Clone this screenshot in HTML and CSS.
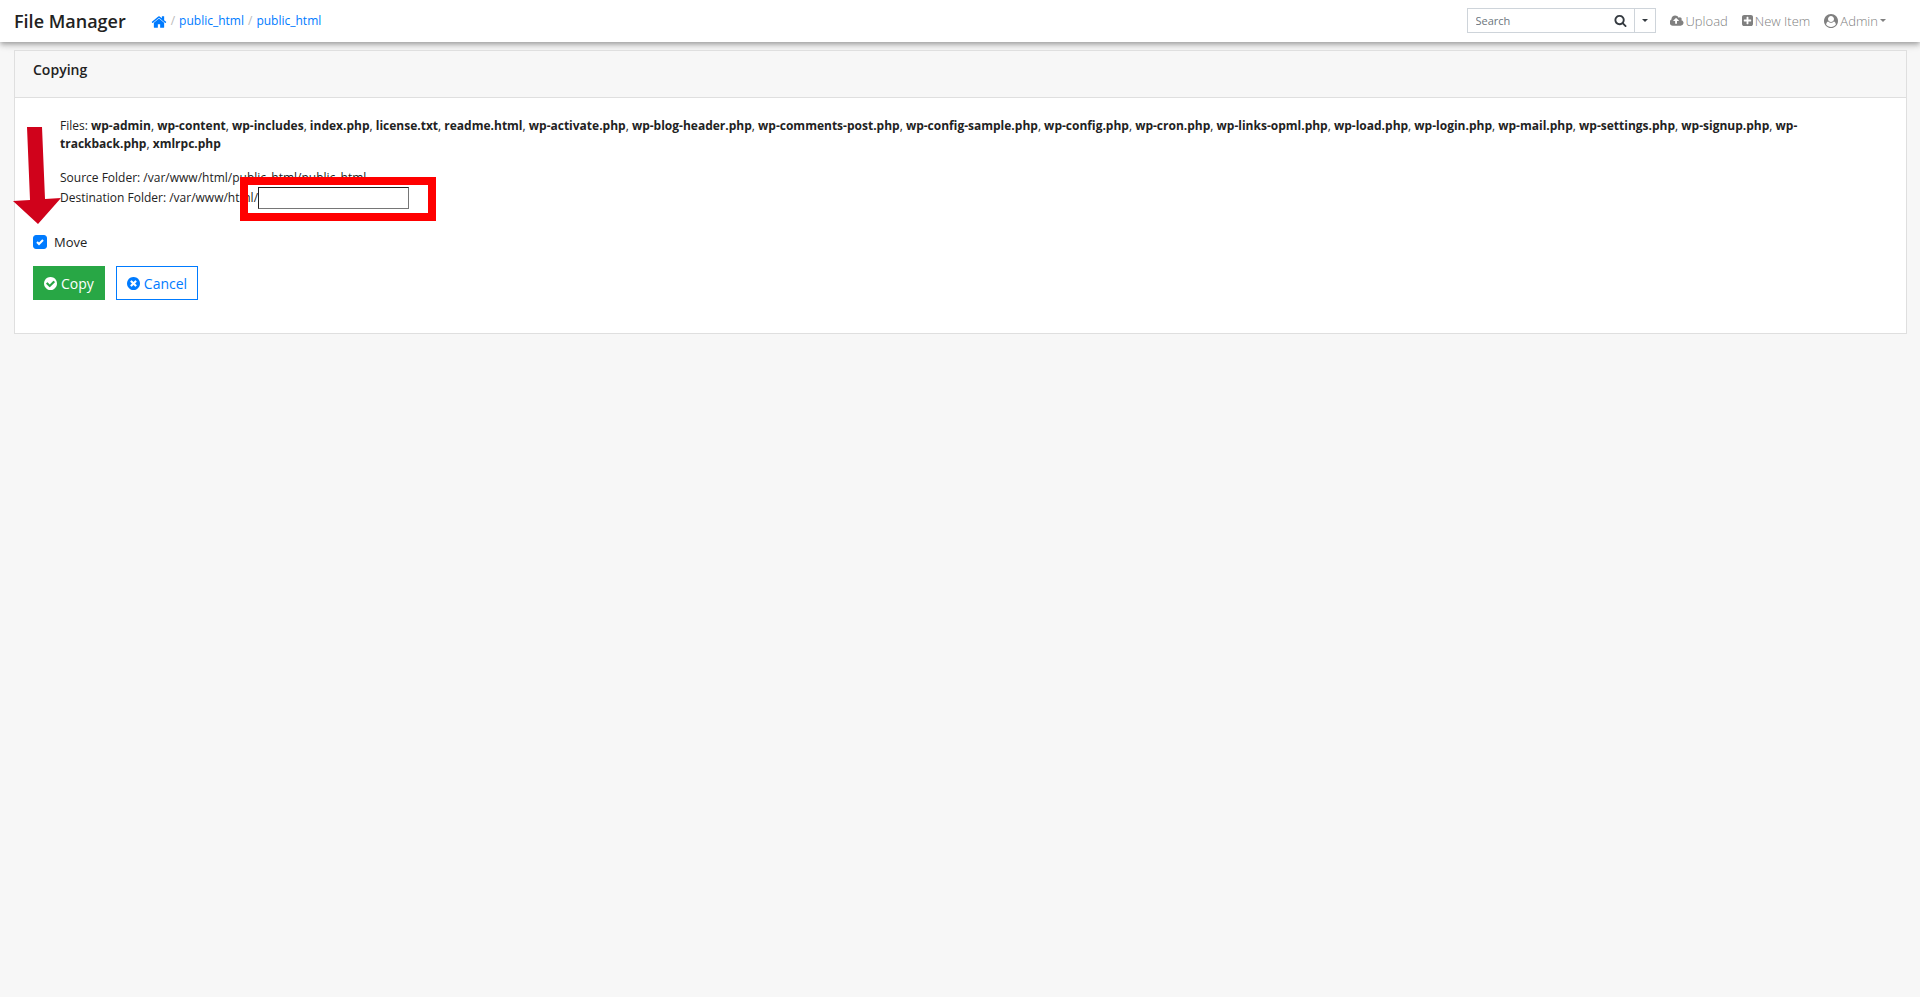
FILE: index.html
```
<!DOCTYPE html>
<html lang="en">
<head>
  <meta charset="UTF-8" />
  <meta name="viewport" content="width=device-width, initial-scale=1.0" />
  <title>File Manager</title>
  <link rel="stylesheet" href="styles.css">
</head>
<body>
  <nav class="navbar">
    <a class="brand" href="#">File Manager</a>
    <div class="breadcrumb">
      <a href="#" aria-label="Home"><svg class="icon icon-home" viewBox="0 0 1792 1792"><path d="M1472 992v480q0 26-19 45t-45 19h-384v-384h-256v384h-384q-26 0-45-19t-19-45v-480q0-1 .5-3t.5-3l575-474 575 474q1 2 1 6zm223-69l-62 74q-8 9-21 11h-3q-13 0-21-7l-692-577-692 577q-12 8-24 7-13-2-21-11l-62-74q-8-10-7-23.5t11-21.5l719-599q32-26 76-26t76 26l244 204v-195q0-14 9-23t23-9h192q14 0 23 9t9 23v408l219 182q10 8 11 21.5t-7 23.5z"/></svg></a>
      <span class="sep">/</span>
      <a href="#">public_html</a>
      <span class="sep">/</span>
      <a href="#">public_html</a>
    </div>

    <form class="search">
      <input type="text" class="search-input" placeholder="Search" aria-label="Search">
      <button type="button" class="search-btn" aria-label="Search"><svg class="icon" viewBox="0 0 1792 1792"><path d="M1216 832q0-185-131.5-316.5t-316.5-131.5-316.5 131.5-131.5 316.5 131.5 316.5 316.5 131.5 316.5-131.5 131.5-316.5zm512 832q0 52-38 90t-90 38q-54 0-90-38l-343-342q-179 124-399 124-143 0-273.5-55.5t-225-150-150-225-55.5-273.5 55.5-273.5 150-225 225-150 273.5-55.5 273.5 55.5 225 150 150 225 55.5 273.5q0 220-124 399l343 343q37 37 37 90z"/></svg></button>
      <button type="button" class="search-more" aria-label="Advanced search"><span class="caret"></span></button>
    </form>

    <div class="nav-links">
      <a href="#"><svg class="icon icon-wide" viewBox="0 0 1920 1792"><path d="M1216 864q0-14-9-23l-352-352q-9-9-23-9t-23 9l-351 351q-10 12-10 24 0 14 9 23t23 9h224v352q0 13 9.5 22.5t22.5 9.5h192q13 0 22.5-9.5t9.5-22.5v-352h224q13 0 22.5-9.5t9.5-22.5zm640 288q0 159-112.5 271.5t-271.5 112.5h-1088q-185 0-316.5-131.5t-131.5-316.5q0-130 70-240t188-165q-2-30-2-43 0-212 150-362t362-150q156 0 285.5 87t188.5 231q71-62 166-62 106 0 181 75t75 181q0 76-41 138 130 31 213.5 135.5t83.5 238.5z"/></svg>Upload</a>
      <a href="#"><svg class="icon icon-square" viewBox="128 128 1536 1536"><path d="M1408 960v-128q0-26-19-45t-45-19h-320v-320q0-26-19-45t-45-19h-128q-26 0-45 19t-19 45v320h-320q-26 0-45 19t-19 45v128q0 26 19 45t45 19h320v320q0 26 19 45t45 19h128q26 0 45-19t19-45v-320h320q26 0 45-19t19-45zm256-544v960q0 119-84.5 203.5t-203.5 84.5h-960q-119 0-203.5-84.5t-84.5-203.5v-960q0-119 84.5-203.5t203.5-84.5h960q119 0 203.5 84.5t84.5 203.5z"/></svg>New Item</a>
      <a href="#"><svg class="icon icon-wide" viewBox="0 0 1792 1792"><path fill-rule="evenodd" d="M1523 1339q-22-155-87.5-257.5t-184.5-118.5q-67 74-159.5 115.5t-195.5 41.5-195.5-41.5-159.5-115.5q-119 16-184.5 118.5t-87.5 257.5q106 150 271 237.5t356 87.5 356-87.5 271-237.5zm-243-699q0-159-112.5-271.5t-271.5-112.5-271.5 112.5-112.5 271.5 112.5 271.5 271.5 112.5 271.5-112.5 112.5-271.5zm512 256q0 182-71 348t-191 286-286 191-348 71-348-71-286-191-191-286-71-348 71-348 191-286 286-191 348-71 348 71 286 191 191 286 71 348z"/></svg>Admin<span class="caret"></span></a>
    </div>
  </nav>

  <form class="card">
    <h6 class="card-header">Copying</h6>
    <div class="card-body">
      <div class="details">
        <p class="files">Files: <b>wp-admin</b>, <b>wp-content</b>, <b>wp-includes</b>, <b>index.php</b>, <b>license.txt</b>, <b>readme.html</b>, <b>wp-activate.php</b>, <b>wp-blog-header.php</b>, <b>wp-comments-post.php</b>, <b>wp-config-sample.php</b>, <b>wp-config.php</b>, <b>wp-cron.php</b>, <b>wp-links-opml.php</b>, <b>wp-load.php</b>, <b>wp-login.php</b>, <b>wp-mail.php</b>, <b>wp-settings.php</b>, <b>wp-signup.php</b>, <b>wp-trackback.php</b>, <b>xmlrpc.php</b></p>
        <div class="source">Source Folder: /var/www/html/public_html/public_html</div>
        <div class="destination">
          <label for="copyTo">Destination Folder: /var/www/html/</label>
          <span class="marked">
            <input type="text" name="copy_to" id="copyTo">
            <span class="highlight"></span>
          </span>
        </div>
      </div>

      <div class="move">
        <input type="checkbox" name="move" id="move" checked>
        <svg class="tick" viewBox="0 0 14 14"><path d="M4 7l2 2 4-4"/></svg>
        <label for="move">Move</label>
        <svg class="arrow" viewBox="0 0 48 98"><path d="M14 1h15l3 72 16-1-23 26L0 75l17-1z"/></svg>
      </div>

      <div class="actions">
        <button type="submit" class="btn btn-success"><svg class="icon" viewBox="128 128 1536 1536"><path d="M1412 734q0-28-18-46l-91-90q-19-19-45-19t-45 19l-408 407-226-226q-19-19-45-19t-45 19l-91 90q-18 18-18 46 0 27 18 45l362 362q19 19 45 19 27 0 46-19l543-543q18-18 18-45zm252 162q0 209-103 385.5t-279.5 279.5-385.5 103-385.5-103-279.5-279.5-103-385.5 103-385.5 279.5-279.5 385.5-103 385.5 103 279.5 279.5 103 385.5z"/></svg>Copy</button>
        <button type="button" class="btn btn-outline"><svg class="icon" viewBox="128 128 1536 1536"><path d="M1277 1122q0-26-19-45l-181-181 181-181q19-19 19-45 0-27-19-46l-90-90q-19-19-46-19-26 0-45 19l-181 181-181-181q-19-19-45-19-27 0-46 19l-90 90q-19 19-19 46 0 26 19 45l181 181-181 181q-19 19-19 45 0 27 19 46l90 90q19 19 46 19 26 0 45-19l181-181 181 181q19 19 45 19 27 0 46-19l90-90q19-19 19-46zm387-226q0 209-103 385.5t-279.5 279.5-385.5 103-385.5-103-279.5-279.5-103-385.5 103-385.5 279.5-279.5 385.5-103 385.5 103 279.5 279.5 103 385.5z"/></svg>Cancel</button>
      </div>
    </div>
  </form>
</body>
</html>
```
FILE: styles.css
```
* {
  box-sizing: border-box;
}
body {
  margin: 0;
  background: #f7f7f7;
  color: #222;
  font-family: "Open Sans", "Noto Sans", sans-serif;
  font-size: 13px;
  line-height: 18px;
}
a {
  color: #007bff;
  text-decoration: none;
}
.icon {
  width: 13px;
  height: 13px;
  fill: currentColor;
}
.caret {
  border-top: 3px solid currentColor;
  border-left: 3px solid transparent;
  border-right: 3px solid transparent;
}

/* Top bar */
.navbar {
  display: flex;
  align-items: center;
  height: 42px;
  padding: 0 34px 1px 14px;
  background: #fff;
  box-shadow: 0 4px 5px 0 rgba(0,0,0,.14), 0 1px 10px 0 rgba(0,0,0,.12), 0 2px 4px -1px rgba(0,0,0,.2);
}
.brand {
  margin-right: 25px;
  color: #222;
  font-size: 18px;
  font-weight: 600;
}
.breadcrumb {
  display: flex;
  align-items: center;
  gap: 4px;
  flex: 1;
  font-size: 12px;
}
.breadcrumb a {
  display: flex;
}
.icon-home {
  width: 16px;
  height: 16px;
  margin-top: 2px;
}
.sep {
  color: #bbb;
}
.search {
  display: flex;
  height: 25px;
  margin-right: 14px;
  border: 1px solid #ced4da;
}
.search-input {
  width: 140px;
  padding: 0 8px;
  border: 0;
  font: 11px "Open Sans", sans-serif;
}
.search-input::placeholder {
  color: #6c757d;
}
.search-btn,
.search-more {
  display: flex;
  align-items: center;
  justify-content: center;
  padding: 0;
  border: 0;
  background: #fff;
  color: #343a40;
}
.search-btn {
  width: 26px;
}
.search-more {
  width: 21px;
  border-left: 1px solid #ced4da;
}
.nav-links {
  display: flex;
  gap: 14px;
}
.nav-links a {
  display: flex;
  align-items: center;
  gap: 2px;
  color: #808080;
  font-weight: 300;
}
.icon-wide {
  width: 14px;
  height: 14px;
}
.icon-square {
  width: 11px;
  height: 11px;
}

/* Copy form */
.card {
  margin: 8px 13px 0 14px;
  background: #fff;
  border: 1px solid #dfdfdf;
}
.card-header {
  margin: 0;
  padding: 10px 18px 18px;
  background: #f7f7f7;
  border-bottom: 1px solid #dfdfdf;
  font-size: 14px;
  font-weight: 600;
}
.card-body {
  padding: 19px 18px 33px;
}
.details {
  padding: 0 27px;
  font-size: 12px;
}
.files {
  margin: 0 0 16px;
}
.files b {
  font-weight: 700;
}
.destination {
  display: flex;
  align-items: center;
}
.marked {
  position: relative;
  display: flex;
}
.marked input {
  width: 151px;
  height: 22px;
  border: 1px inset #767676;
}
.highlight {
  position: absolute;
  top: -10px;
  left: -18px;
  width: 196px;
  height: 44px;
  border: 8px solid #f00;
  pointer-events: none;
}
.move {
  position: relative;
  display: flex;
  align-items: center;
  gap: 7px;
  margin-top: 24px;
}
.move input {
  appearance: none;
  width: 14px;
  height: 14px;
  margin: 0;
  border-radius: 3px;
  background: #fff;
  border: 1px solid #adb5bd;
}
.move input:checked {
  background: #007bff;
  border-color: #007bff;
}
.tick {
  position: absolute;
  left: 0;
  width: 14px;
  height: 14px;
  fill: none;
  stroke: #fff;
  stroke-width: 2;
  pointer-events: none;
}
.move label {
  font-size: 13px;
}
.arrow {
  position: absolute;
  left: -20px;
  bottom: 27px;
  width: 48px;
  height: 98px;
  fill: #d0021b;
}
.actions {
  display: flex;
  gap: 11px;
  margin-top: 15px;
}
.btn {
  display: flex;
  align-items: center;
  gap: 4px;
  height: 34px;
  padding: 0 10px;
  border: 1px solid #007bff;
  background: #fff;
  color: #007bff;
  font: 14px "Open Sans", sans-serif;
  cursor: pointer;
}
.btn-success {
  background: #28a745;
  border-color: #28a745;
  color: #fff;
}
```
